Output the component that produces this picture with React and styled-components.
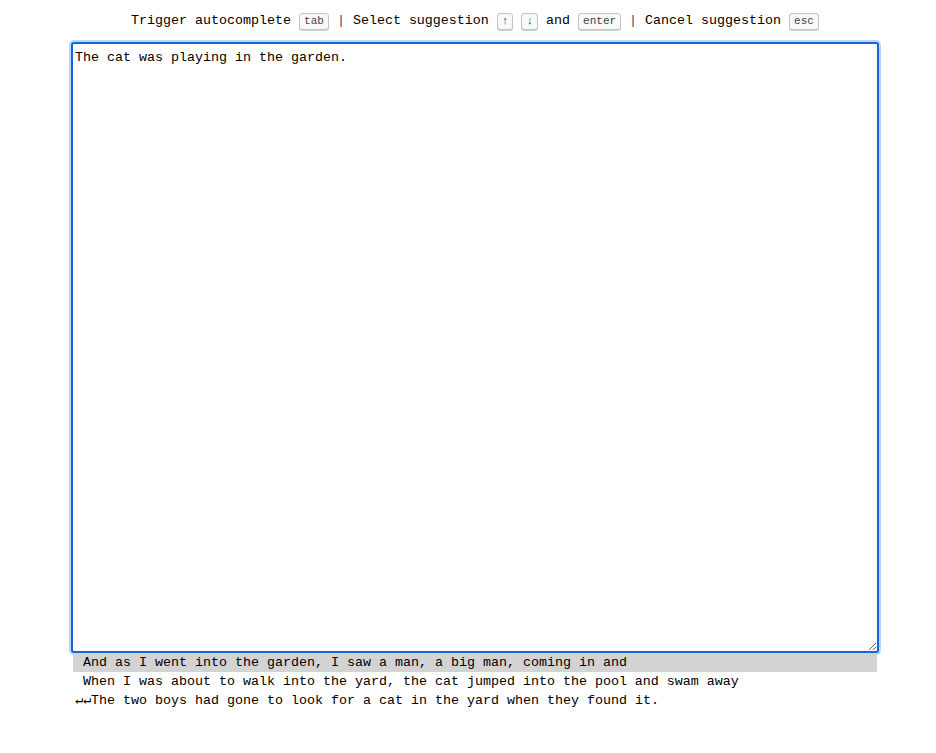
import React, { useEffect, useRef } from "react";
import styled, { createGlobalStyle } from "styled-components";

const GlobalStyle = createGlobalStyle`
  body {
    margin: 8px;
    background: #fff;
    font-family: "Liberation Mono", "DejaVu Sans Mono", monospace;
    font-size: 13.33px;
    color: #000;
  }
`;

const Wrap = styled.div`
  width: 810px;
  margin-left: 62px;
`;

const Help = styled.div`
  text-align: center;
  height: 25px;
  line-height: 25px;
  margin-bottom: 9px;
  white-space: pre;
`;

const Key = styled.kbd`
  display: inline-block;
  box-sizing: border-box;
  height: 17px;
  line-height: 15px;
  padding: 0 4px;
  vertical-align: 0;
  border: 1px solid #c4c4c4;
  border-radius: 3px;
  background: #f8f8f8;
  box-shadow: 0 1px 0 rgba(0, 0, 0, 0.18);
  font-family: "Liberation Mono", "DejaVu Sans Mono", monospace;
  font-size: 11px;
  color: #444;
`;

const Pipe = styled.span`
  color: #3a4a5a;
`;

const Editor = styled.textarea`
  display: block;
  box-sizing: border-box;
  width: 808px;
  height: 611px;
  margin: 0 1px;
  padding: 6px 2px 2px;
  border: 2px solid #1467d8;
  border-radius: 3px;
  box-shadow: 0 0 0 2px #b6d6fa;
  outline: none;
  font-family: "Liberation Mono", "DejaVu Sans Mono", monospace;
  font-size: 13.33px;
  line-height: 16px;
  color: #000;
  caret-color: #000;
  &:focus {
    outline: none;
  }
`;

const List = styled.ul`
  list-style: none;
  margin: 0 3px;
  padding: 0;
`;

const Item = styled.li`
  height: 19px;
  line-height: 19px;
  padding-left: 2px;
  white-space: pre;
  background: ${(p) => (p.$active ? "#d3d3d3" : "transparent")};
`;

const suggestions = [
  " And as I went into the garden, I saw a man, a big man, coming in and",
  " When I was about to walk into the yard, the cat jumped into the pool and swam away",
  "\u21b5\u21b5The two boys had gone to look for a cat in the yard when they found it.",
];

export default function App() {
  const ref = useRef(null);

  useEffect(() => {
    const el = ref.current;
    if (el) {
      el.focus();
      el.setSelectionRange(el.value.length, el.value.length);
    }
  }, []);

  return (
    <Wrap>
      <GlobalStyle />
      <Help>
        Trigger autocomplete <Key>tab</Key> <Pipe>|</Pipe> Select suggestion{" "}
        <Key>↑</Key> <Key>↓</Key> and <Key>enter</Key> <Pipe>|</Pipe> Cancel
        suggestion <Key>esc</Key>
      </Help>
      <Editor ref={ref} defaultValue="The cat was playing in the garden." spellCheck={false} />
      <List>
        {suggestions.map((s, i) => (
          <Item key={i} $active={i === 0}>
            {s}
          </Item>
        ))}
      </List>
    </Wrap>
  );
}
